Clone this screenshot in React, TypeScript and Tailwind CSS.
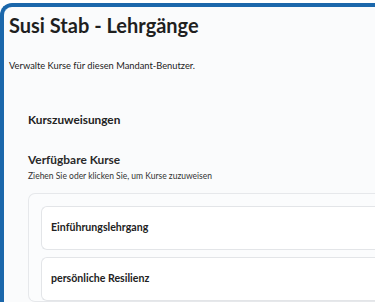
import React from 'react';

const courses = ['Einführungslehrgang', 'persönliche Resilienz'];

export default function App() {
  return (
    <div className="h-[302px] w-[375px] overflow-hidden bg-white pt-[3px] font-['Lato',sans-serif] text-[#222]">
      <div className="h-[320px] rounded-tl-[12px] border-l-4 border-t-4 border-[#1b67ab] bg-[#fafbfc] pl-[5px]">
        {/* Header */}
        <h1 className="mt-[5px] text-[20px] font-bold leading-[26px] text-[#1f1f1f]">
          Susi Stab - Lehrgänge
        </h1>
        <p className="mt-[21px] text-[9.3px] leading-[14px] text-[#222]">
          Verwalte Kurse für diesen Mandant-Benutzer.
        </p>

        {/* Assignment section */}
        <div className="pl-[19px] pt-[39px]">
          <h2 className="text-[11.8px] font-bold leading-[16px]">Kurszuweisungen</h2>
          <h3 className="mt-[23px] text-[11.9px] font-bold leading-[17px] text-[#2a2a2a]">
            Verfügbare Kurse
          </h3>
          <p className="mt-[2px] text-[8.5px] leading-[12px] text-[#333]">
            Ziehen Sie oder klicken Sie, um Kurse zuzuweisen
          </p>

          <div className="mt-[11px] rounded-l-[7px] border border-r-0 border-[#e6e8eb] bg-[#fbfcfd] pl-[12px] pt-[12px]">
            <div className="flex flex-col gap-[7px]">
              {courses.map((c) => (
                <div
                  key={c}
                  className="flex h-[44px] items-center rounded-l-[6px] border border-r-0 border-[#e3e5e8] bg-white pl-[9px]"
                >
                  <span className="text-[10.6px] font-bold text-[#222]">{c}</span>
                </div>
              ))}
            </div>
          </div>
        </div>
      </div>
    </div>
  );
}
